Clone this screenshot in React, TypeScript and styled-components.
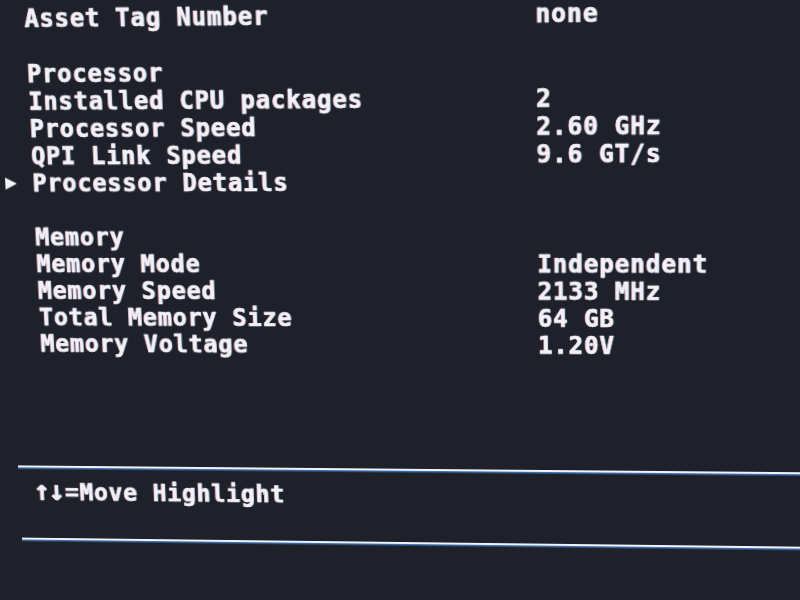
import React from 'react'
import styled, { createGlobalStyle } from 'styled-components'

const BG = '#1e2129'
const TEXT = '#f3f0f6'
const LINE = '#eef3ff'
const ROW = 27

type Pt = [number, number]
type Match = { from: Pt; to: Partial<{ x: number; y: number }>; w?: number }

// the monitor was photographed at a slight angle: least-squares fit of the flat screen onto the photo
const fitQuad = (matches: Match[]) => {
  const eqs: number[][] = []
  matches.forEach(({ from: [x, y], to: { x: u, y: v }, w = 1 }) => {
    if (u !== undefined) eqs.push([x, y, 1, 0, 0, 0, -x * u, -y * u, u].map((n) => n * w))
    if (v !== undefined) eqs.push([0, 0, 0, x, y, 1, -x * v, -y * v, v].map((n) => n * w))
  })
  const a = Array.from({ length: 8 }, (_, i) =>
    Array.from({ length: 9 }, (_, j) => eqs.reduce((s, e) => s + e[i] * e[j], 0)),
  )
  for (let c = 0; c < 8; c++) {
    let p = c
    for (let r = c + 1; r < 8; r++) if (Math.abs(a[r][c]) > Math.abs(a[p][c])) p = r
    ;[a[c], a[p]] = [a[p], a[c]]
    for (let r = 0; r < 8; r++) {
      if (r === c) continue
      const f = a[r][c] / a[c][c]
      for (let k = c; k < 9; k++) a[r][k] -= f * a[c][k]
    }
  }
  const h = a.map((row, i) => row[8] / row[i])
  return `matrix3d(${[h[0], h[3], 0, h[6], h[1], h[4], 0, h[7], 0, 0, 1, 0, h[2], h[5], 0, 1].join(',')})`
}

const TILT = fitQuad([
  { from: [30, 16], to: { x: 23, y: 17 }, w: 3 },
  { from: [537, 16], to: { x: 537, y: 13 }, w: 3 },
  { from: [30, 340], to: { x: 41, y: 341 }, w: 3 },
  { from: [537, 340], to: { x: 537, y: 341 }, w: 3 },
  { from: [537, 259], to: { x: 536, y: 262 }, w: 2 },
  { from: [0, 178], to: { x: 4, y: 182 } },
  { from: [0, 467], to: { x: 20, y: 467 } },
  { from: [800, 467], to: { y: 474 } },
  { from: [15, 493.5], to: { x: 36, y: 493 } },
  { from: [0, 541], to: { x: 22, y: 540 } },
  { from: [800, 541], to: { y: 552 } },
])

const GlobalStyle = createGlobalStyle`
  html, body {
    margin: 0;
    width: 800px;
    height: 600px;
    overflow: hidden;
    background: ${BG};
  }
`

const Screen = styled.div`
  width: 800px;
  height: 600px;
  padding-top: 4.5px;
  box-sizing: border-box;
  transform-origin: 0 0;
  transform: ${TILT};
  font-family: 'DejaVu Sans Mono', 'Liberation Mono', monospace;
  font-weight: bold;
  font-size: 24px;
  letter-spacing: 0.85px;
  color: ${TEXT};
  -webkit-text-stroke: 0.5px ${TEXT};
  text-shadow: -0.8px 0 rgba(255, 110, 140, 0.55), 0.8px 0 rgba(110, 200, 255, 0.55);
  white-space: pre;
`

const Row = styled.div`
  display: grid;
  grid-template-columns: 30px 507px 1fr;
  align-items: center;
  height: ${ROW}px;
  line-height: 18px;
`

const Marker = styled.span`
  justify-self: start;
  margin-left: 2px;
  width: 0;
  height: 0;
  border-left: 12px solid ${TEXT};
  border-top: 6px solid transparent;
  border-bottom: 6px solid transparent;
`

const Rule = styled.div<{ $gap: number }>`
  margin-top: ${({ $gap }) => $gap}px;
  height: 2px;
  background: ${LINE};
  box-shadow: 0 1.5px 0 rgba(70, 140, 220, 0.8);
`

const HelpRow = styled.div`
  margin-top: 11px;
  height: ${ROW}px;
  line-height: ${ROW}px;
  padding-left: 15px;
`

const Arrows = styled.span`
  font-size: 29px;
  letter-spacing: -2px;
  margin-right: 2px;
`

type Item = { label?: string; value?: string; selected?: boolean }

const ITEMS: Item[] = [
  { label: 'Asset Tag Number', value: 'none' },
  {},
  { label: 'Processor' },
  { label: 'Installed CPU packages', value: '2' },
  { label: 'Processor Speed', value: '2.60 GHz' },
  { label: 'QPI Link Speed', value: '9.6 GT/s' },
  { label: 'Processor Details', selected: true },
  {},
  { label: 'Memory' },
  { label: 'Memory Mode', value: 'Independent' },
  { label: 'Memory Speed', value: '2133 MHz' },
  { label: 'Total Memory Size', value: '64 GB' },
  { label: 'Memory Voltage', value: '1.20V' },
]

export default function App() {
  return (
    <>
      <GlobalStyle />
      <Screen>
        {ITEMS.map((item, i) => (
          <Row key={i}>
            {item.selected ? <Marker /> : <span />}
            <span>{item.label ?? ''}</span>
            <span>{item.value ?? ''}</span>
          </Row>
        ))}
        <Rule $gap={112} />
        <HelpRow>
          <Arrows>↑↓</Arrows>=Move Highlight
        </HelpRow>
        <Rule $gap={36} />
      </Screen>
    </>
  )
}
